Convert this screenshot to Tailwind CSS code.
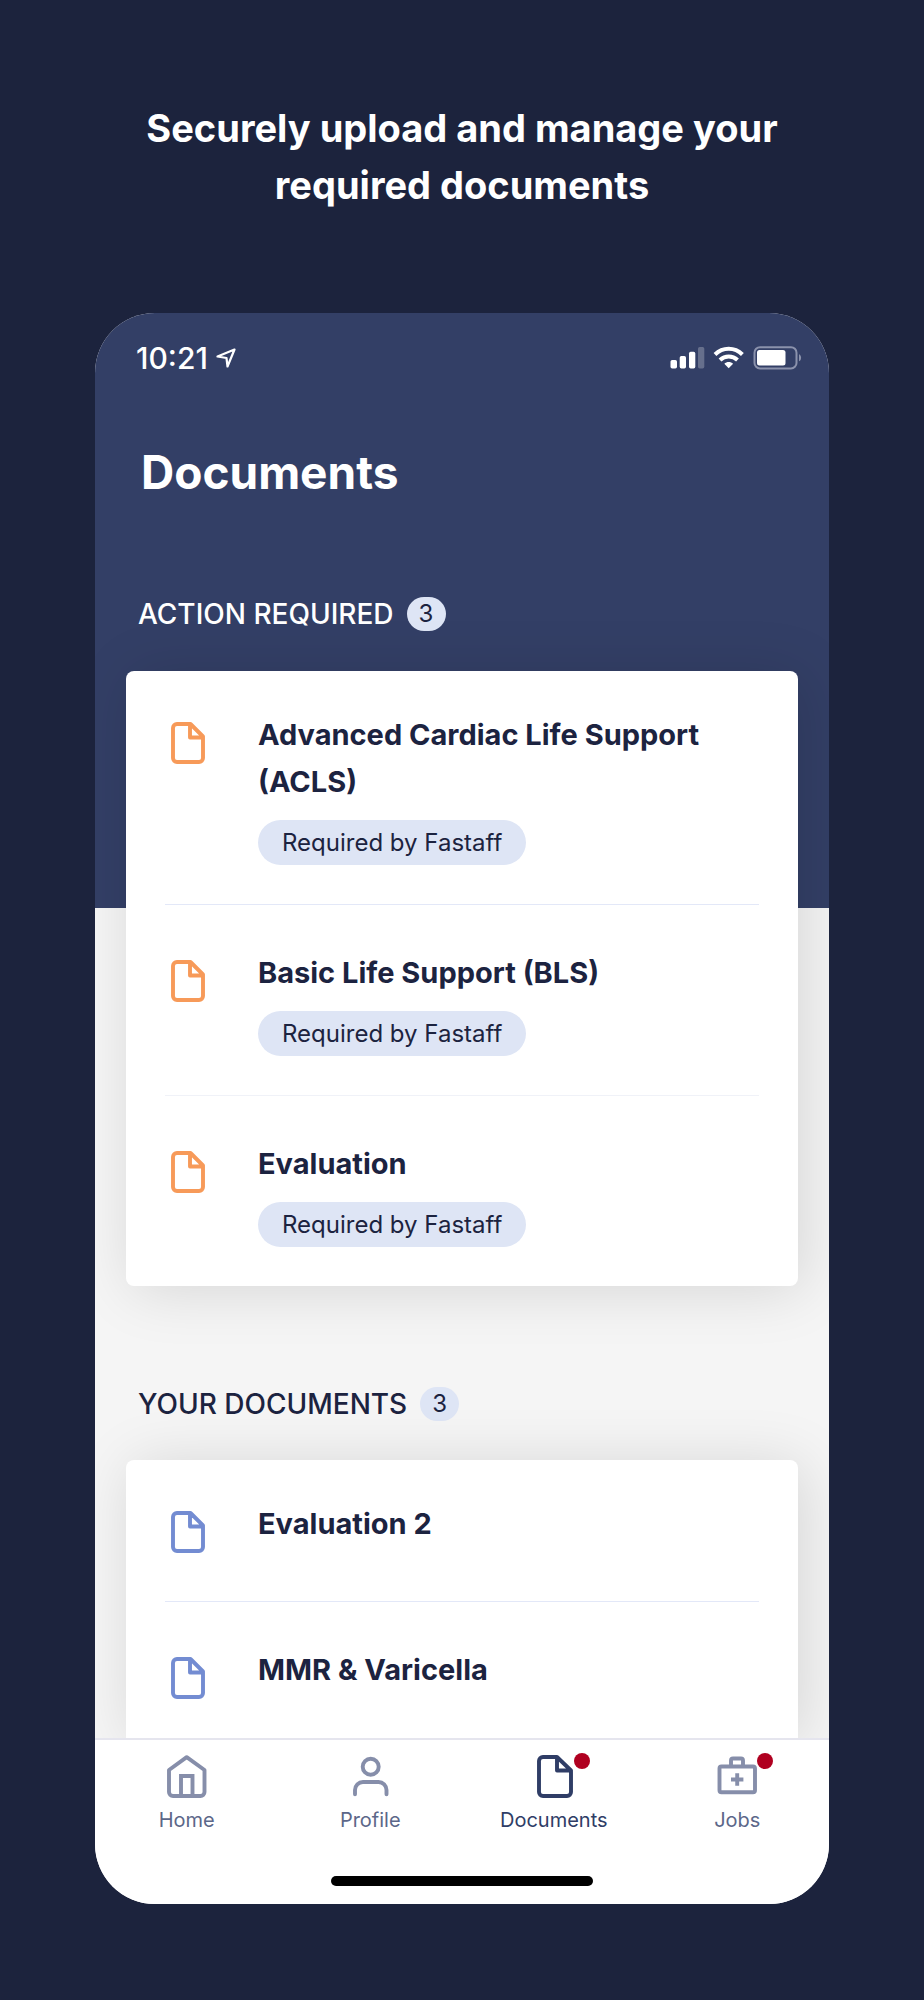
<!DOCTYPE html>
<html lang="en">
<head>
    <meta charset="UTF-8">
    <meta name="viewport" content="width=device-width, initial-scale=1.0">
    <title>Documents</title>
    <script src="https://cdn.jsdelivr.net/npm/@tailwindcss/browser@4"></script>
</head>
<body class="bg-[#1c233d] font-[Inter,sans-serif] text-[#1c2340]">
    <!-- Shared icons -->
    <svg class="hidden" aria-hidden="true">
        <symbol id="file" viewBox="0 0 34 42">
            <path d="M6 2h13.500L32 14.500V36a4 4 0 0 1-4 4H6a4 4 0 0 1-4-4V6a4 4 0 0 1 4-4zM19 2v13.500h13" fill="none" stroke="currentColor" stroke-width="3.900" stroke-linejoin="round"/>
        </symbol>
    </svg>

    <div class="min-h-screen flex flex-col px-[95px] pt-[100px] pb-24">
        <h1 class="text-center text-white text-[38px] leading-[57px] font-bold">Securely upload and manage your<br>required documents</h1>

        <!-- Phone -->
        <div class="mt-[99px] flex-1 flex flex-col rounded-[60px] overflow-hidden bg-[#f5f5f5]">
            <header class="bg-[#333f66] text-white pb-[277px]">
                <!-- Status bar -->
                <div class="flex items-center justify-between h-[90px] pl-[41px] pr-[27px]">
                    <div class="flex items-center gap-2">
                        <span class="text-[30px] font-medium">10:21</span>
                        <svg class="size-5" viewBox="0 0 20 20" fill="none" stroke="currentColor" stroke-width="2.200" stroke-linejoin="round" aria-hidden="true">
                            <path d="M18.500 1.500 1.500 8.500l9 1.500 1 8.500z"/>
                        </svg>
                    </div>
                    <svg class="w-[132px] h-6" viewBox="0 0 132 24" fill="none" aria-hidden="true">
                        <g fill="#fff">
                            <rect x="0.500" y="14" width="6.500" height="8.500" rx="1.700"/>
                            <rect x="9.700" y="10" width="6.300" height="12.500" rx="1.700"/>
                            <rect x="19" y="5.700" width="6.300" height="16.800" rx="1.700"/>
                            <rect x="28" y="1" width="6.300" height="21.500" rx="1.700" opacity=".25"/>
                            <path d="M58.700 22.300l-4.400-4.500c2.400-2.400 6.400-2.400 8.800 0z"/>
                            <rect x="87" y="4" width="28.500" height="15.500" rx="2.500"/>
                        </g>
                        <g stroke="#fff" stroke-width="4">
                            <path d="M45 8.500c7.700-7.600 19.700-7.600 27.400 0"/>
                            <path d="M50 14c5-4.800 12.500-4.800 17.500 0"/>
                        </g>
                        <rect x="84.500" y="1.200" width="42" height="21.200" rx="5.500" stroke="#8b92ac" stroke-width="2"/>
                        <path d="M129 8.300c2.800 1 2.800 6 0 7z" fill="#8b92ac"/>
                    </svg>
                </div>
                <h2 class="mt-[37px] px-[46px] text-[46px] leading-[64px] font-bold">Documents</h2>
                <div class="mt-[93px] px-[43px] flex items-center gap-[13px]">
                    <h3 class="text-[28px] leading-[34px] font-medium">ACTION REQUIRED</h3>
                    <span class="w-[39px] h-[34px] rounded-full bg-[#dee5f5] text-[#1c2340] text-[24px] leading-[34px] text-center">3</span>
                </div>
            </header>

            <main class="flex-1 flex flex-col px-[31px] -mt-[237px]">
                <!-- Action required -->
                <ul class="rounded-lg bg-white px-[39px] shadow-[6px_4px_60px_rgba(0,0,0,0.13)]">
                    <li class="flex items-start gap-[53px] pl-[6px] pt-[40px] pb-[39px] border-b border-[#e3e8f8]">
                        <svg class="w-[34px] h-[42px] mt-[11px] shrink-0 text-[#f79a59]" aria-hidden="true"><use href="#file"/></svg>
                        <div>
                            <h4 class="text-[29px] leading-[47px] font-bold">Advanced Cardiac Life Support (ACLS)</h4>
                            <span class="mt-[15px] inline-block rounded-full bg-[#dee5f5] px-6 text-[24px] leading-[45px]">Required by Fastaff</span>
                        </div>
                    </li>
                    <li class="flex items-start gap-[53px] pl-[6px] pt-[44px] pb-[39px] border-b border-[#f0f2f8]">
                        <svg class="w-[34px] h-[42px] mt-[11px] shrink-0 text-[#f79a59]" aria-hidden="true"><use href="#file"/></svg>
                        <div>
                            <h4 class="text-[29px] leading-[47px] font-bold">Basic Life Support (BLS)</h4>
                            <span class="mt-[15px] inline-block rounded-full bg-[#dee5f5] px-6 text-[24px] leading-[45px]">Required by Fastaff</span>
                        </div>
                    </li>
                    <li class="flex items-start gap-[53px] pl-[6px] pt-[44px] pb-[39px]">
                        <svg class="w-[34px] h-[42px] mt-[11px] shrink-0 text-[#f79a59]" aria-hidden="true"><use href="#file"/></svg>
                        <div>
                            <h4 class="text-[29px] leading-[47px] font-bold">Evaluation</h4>
                            <span class="mt-[15px] inline-block rounded-full bg-[#dee5f5] px-6 text-[24px] leading-[45px]">Required by Fastaff</span>
                        </div>
                    </li>
                </ul>

                <!-- Your documents -->
                <div class="mt-[101px] px-3 flex items-center gap-[13px]">
                    <h3 class="text-[28px] leading-[34px] font-medium">YOUR DOCUMENTS</h3>
                    <span class="w-[39px] h-[34px] rounded-full bg-[#dee5f5] text-[24px] leading-[34px] text-center">3</span>
                </div>
                <ul class="mt-[39px] flex-1 rounded-t-lg bg-white px-[39px] shadow-[6px_4px_60px_rgba(0,0,0,0.13)]">
                    <li class="flex items-start gap-[53px] pl-[6px] pt-[40px] pb-[48px] border-b border-[#e3e8f8]">
                        <svg class="w-[34px] h-[42px] mt-[11px] shrink-0 text-[#738cd2]" aria-hidden="true"><use href="#file"/></svg>
                        <h4 class="text-[29px] leading-[47px] font-bold">Evaluation 2</h4>
                    </li>
                    <li class="flex items-start gap-[53px] pl-[6px] pt-[44px]">
                        <svg class="w-[34px] h-[42px] mt-[11px] shrink-0 text-[#738cd2]" aria-hidden="true"><use href="#file"/></svg>
                        <h4 class="text-[29px] leading-[47px] font-bold">MMR &amp; Varicella</h4>
                    </li>
                </ul>
            </main>

            <!-- Tab bar -->
            <nav class="relative bg-white border-t-2 border-[#e5e5ee] pt-3 pb-[18px] text-[20px] leading-7 text-[#5c6789]">
                <div class="grid grid-cols-4">
                    <a href="#" class="flex flex-col items-center gap-[6px]">
                        <svg class="size-12 text-[#868eaa]" viewBox="0 0 48 48" fill="none" stroke="currentColor" stroke-width="3.900" stroke-linejoin="round" aria-hidden="true">
                            <path d="M23.700 5.200 41.500 18v22a4 4 0 0 1-4 4H10a4 4 0 0 1-4-4V18z"/>
                            <path d="M18 44V24h11.500v20" stroke-linejoin="miter"/>
                        </svg>
                        Home
                    </a>
                    <a href="#" class="flex flex-col items-center gap-[6px]">
                        <svg class="size-12 text-[#868eaa]" viewBox="0 0 48 48" fill="none" stroke="currentColor" stroke-width="3.900" stroke-linecap="round" aria-hidden="true">
                            <circle cx="24.700" cy="14.700" r="8"/>
                            <path d="M9 42.200v-4.200a8 8 0 0 1 8-8h15.500a8 8 0 0 1 8 8v4.200"/>
                        </svg>
                        Profile
                    </a>
                    <a href="#" class="flex flex-col items-center gap-[6px] text-[#2f3d66]" aria-current="page">
                        <span class="relative">
                            <svg class="size-12" viewBox="0 0 48 48" fill="none" stroke="currentColor" stroke-width="3.900" stroke-linejoin="round" aria-hidden="true">
                                <path d="M13 5h14l14 13.500V40a4 4 0 0 1-4 4H13a4 4 0 0 1-4-4V9a4 4 0 0 1 4-4zM27 5v13.500h14"/>
                            </svg>
                            <span class="absolute -right-3 top-px size-4 rounded-full bg-[#b00020]"></span>
                        </span>
                        Documents
                    </a>
                    <a href="#" class="flex flex-col items-center gap-[6px]">
                        <span class="relative text-[#868eaa]">
                            <svg class="size-12" viewBox="0 0 48 48" fill="none" stroke="currentColor" stroke-width="3.900" aria-hidden="true">
                                <rect x="6.500" y="14.500" width="35.500" height="25.700" rx="2"/>
                                <path d="M18 14V8.500a2 2 0 0 1 2-2h8a2 2 0 0 1 2 2V14"/>
                                <path d="M24.200 21.300v12.400M18 27.500h12.400"/>
                            </svg>
                            <span class="absolute -right-3 top-px size-4 rounded-full bg-[#b00020]"></span>
                        </span>
                        Jobs
                    </a>
                </div>
                <div class="mt-[42px] mx-auto w-[262px] h-[10px] rounded-full bg-black"></div>
            </nav>
        </div>
    </div>
</body>
</html>
